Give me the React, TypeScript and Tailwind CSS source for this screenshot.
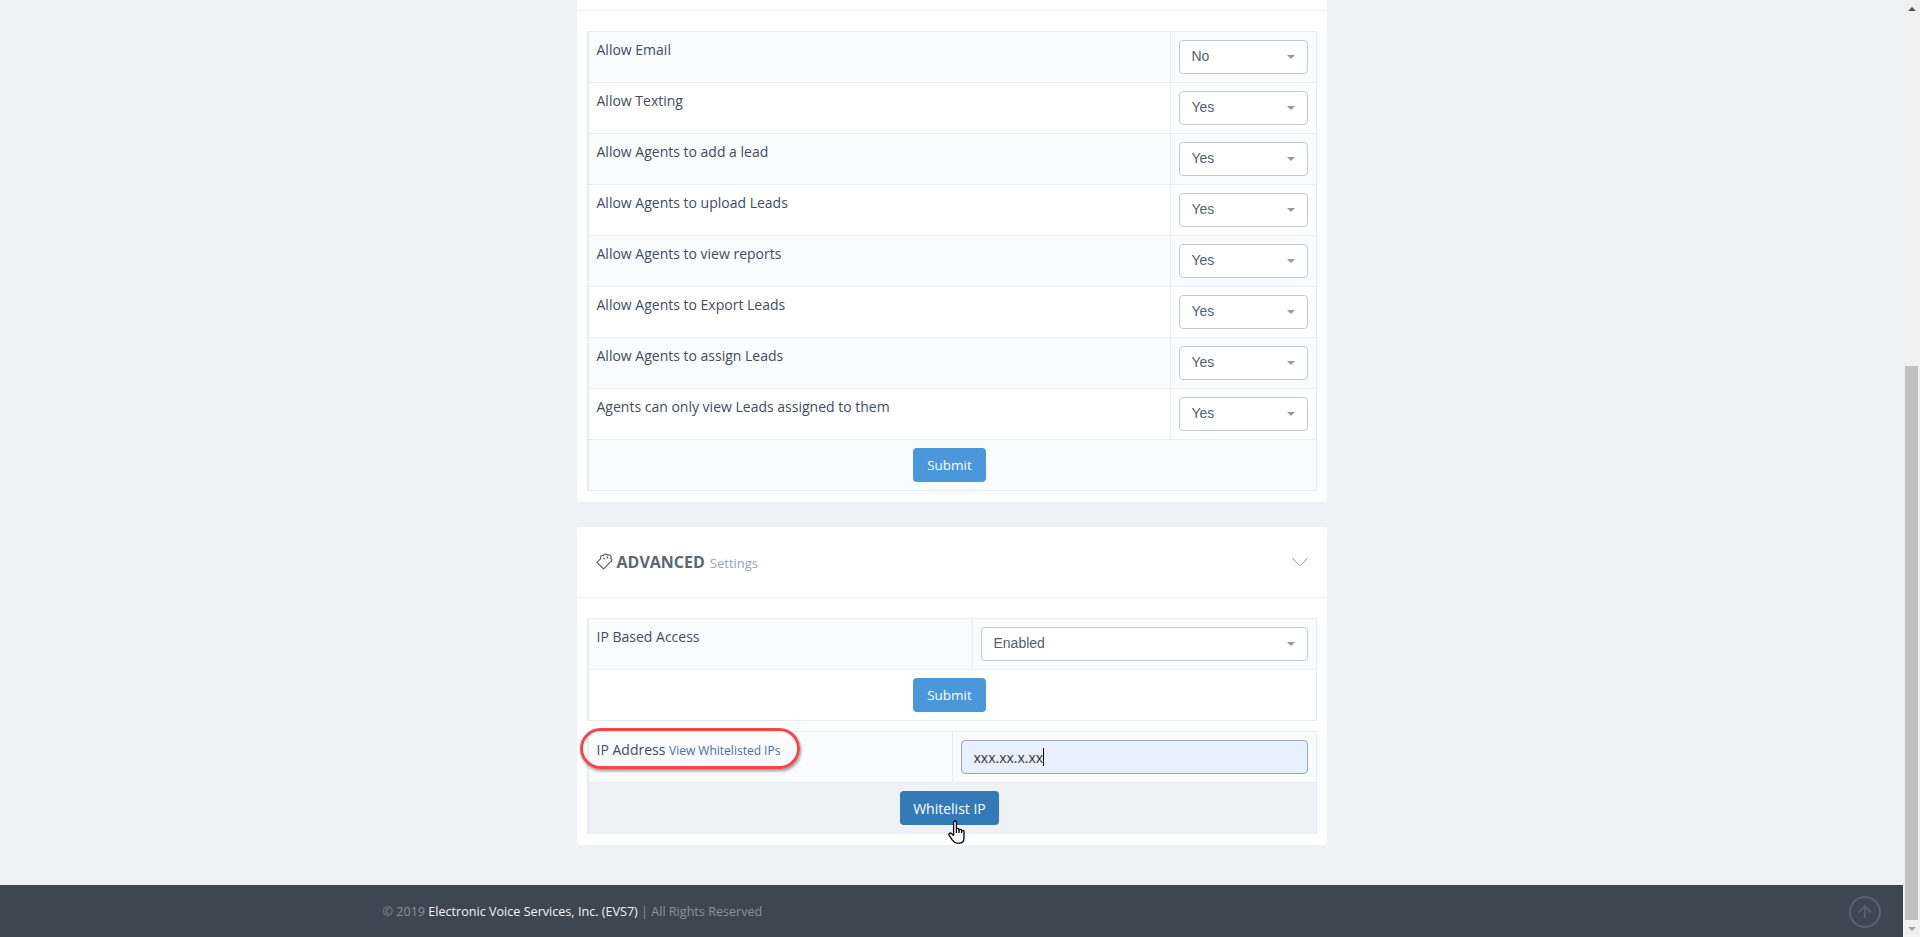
import React from "react";
import { ArrowUp, ChevronDown } from "lucide-react";

const toggles = [
  { label: "Allow Email", value: "No" },
  { label: "Allow Texting", value: "Yes" },
  { label: "Allow Agents to add a lead", value: "Yes" },
  { label: "Allow Agents to upload Leads", value: "Yes" },
  { label: "Allow Agents to view reports", value: "Yes" },
  { label: "Allow Agents to Export Leads", value: "Yes" },
  { label: "Allow Agents to assign Leads", value: "Yes" },
  { label: "Agents can only view Leads assigned to them", value: "Yes" },
];

const FakeSelect: React.FC<{ value: string }> = ({ value }) => {
  return (
    <div className="flex h-[34px] w-full items-center justify-between rounded-[4px] border border-[#c2cad8] bg-white pb-[1px] pl-[12px] pr-[12px] font-['Liberation_Sans',sans-serif] text-[14px] text-[#555e6e]">
      <span>{value}</span>
      <span className="h-0 w-0 border-x-[4px] border-t-[4px] border-x-transparent border-t-[#999]"></span>
    </div>
  );
};

const SubmitButton: React.FC = () => {
  return (
    <button className="h-[34px] w-[73px] rounded-[4px] bg-[#4a98db] text-[13.5px] text-white">
      Submit
    </button>
  );
};

// outline of the tag icon next to the section title
const TagIcon: React.FC = () => {
  return (
    <svg viewBox="0 0 16 16" className="mr-[4px] h-[17px] w-[17px] -translate-y-[1px] self-center text-[#5e6670]" fill="none" stroke="currentColor" strokeWidth="1.15" strokeLinejoin="round">
      <path d="M0.8 8.8 L4.6 5 C3.4 3.2 5.6 1.4 7 2.6 C7.2 0.6 10.4 0.4 10.8 2.2 C13 1 15.2 3.2 13.8 5.2 C15.4 6 15 8.2 13.2 8.6 L7.2 15 Z" />
      <path d="M6.6 5.2 C7.6 4.8 8.2 5.4 8.2 6.2 M9.6 3.8 C10.6 3.6 11.2 4.2 11 5.2" />
    </svg>
  );
};

// hand cursor sitting on the Whitelist IP button
const HandCursor: React.FC = () => {
  return (
    <svg viewBox="0 0 18 24" className="absolute left-[48px] top-[29px] h-[24px] w-[18px]" fill="#fff" stroke="#000" strokeWidth="1.3" strokeLinejoin="round">
      <path d="M5.6 13 V2.4 a1.4 1.4 0 0 1 2.8 0 V9.6 a1.3 1.3 0 0 1 2.6 0 V10.6 a1.3 1.3 0 0 1 2.6 0 V11.6 a1.2 1.2 0 0 1 2.4 0 V18 c0 3.2-2 5.2-5 5.2 h-1.6 c-2.4 0-3.6-1-5-3 L1.2 15.4 c-1-1.5 .9-3 2.2-2 L5.6 15.4 Z" />
      <path d="M8.4 10 V13 M11 10.4 V13 M13.6 11.4 V13" fill="none" />
    </svg>
  );
};

export default function App() {
  return (
    <div className="flex h-[937px] overflow-hidden bg-[#eef1f6] font-['Open_Sans',sans-serif] text-[14px] text-[#434c5b]">
      <div className="flex w-[1903px] flex-col">
        <div className="mx-auto w-[750px] rounded-b-[4px] bg-white px-[10px] pb-[11px]">
          <div className="-mx-[10px] h-[11px] border-b border-[#eef1f5]"></div>
          <div className="mt-5 w-[730px] border border-l-2 border-[#e7ecf1]">
            {toggles.map((item, i) => (
              <div
                key={item.label}
                className={
                  i % 2 === 0
                    ? "flex h-[51px] border-b border-[#e7ecf1] bg-[#fafbfd]"
                    : "flex h-[51px] border-b border-[#e7ecf1] bg-white"
                }
              >
                <div className="flex-1 p-[8px] leading-[20px]">{item.label}</div>
                <div className="w-[146px] border-l border-[#e7ecf1] p-[8px]">
                  <FakeSelect value={item.value} />
                </div>
              </div>
            ))}
            <div className="flex h-[50px] items-center justify-center bg-[#fafbfd] pr-[5px]">
              <SubmitButton />
            </div>
          </div>
        </div>

        <div className="mx-auto mt-[25px] w-[750px] rounded-[4px] bg-white px-[10px] pb-[11px]">
          <div className="-mx-[10px] flex h-[71px] items-center justify-between border-b border-[#eef1f5] pl-[19px] pr-[12px]">
            <div className="flex items-baseline">
              <TagIcon />
              <span className="text-[16px] font-bold text-[#5e6670]">ADVANCED</span>
              <span className="ml-[5px] text-[13px] text-[#9aa4b3]">Settings</span>
            </div>
            <ChevronDown size={30} strokeWidth={0.8} className="text-[#8a929c]" />
          </div>

          <div className="mt-5 w-[730px] border border-l-2 border-[#e7ecf1]">
            <div className="flex h-[50px] bg-[#fafbfd]">
              <div className="flex-1 p-[8px] leading-[20px]">IP Based Access</div>
              <div className="w-[344px] border-l border-[#e7ecf1] p-[8px]">
                <FakeSelect value="Enabled" />
              </div>
            </div>
            <div className="flex h-[51px] items-center justify-center border-t border-[#e7ecf1] bg-white pr-[5px]">
              <SubmitButton />
            </div>
          </div>

          <div className="mt-[10px] w-[730px] border border-l-2 border-[#e7ecf1]">
            <div className="relative flex h-[51px] border-b border-[#e7ecf1] bg-[#fafbfd]">
              <div className="flex-1 p-[8px] leading-[20px]">
                IP Address{" "}
                <a className="text-[12px] text-[#4a6ea8]">View Whitelisted IPs</a>
              </div>
              <div className="w-[364px] border-l border-[#e7ecf1] p-[8px]">
                <div className="flex h-[34px] items-center rounded-[4px] border border-[#98a6c4] bg-[#e8f0fe] px-3 text-[14px] text-[#333]">
                  xxx.xx.x.xx
                  <span className="h-[18px] w-px bg-black"></span>
                </div>
              </div>
              <div className="absolute left-[-9px] top-[-4px] h-[41px] w-[220px] rounded-full border-[3px] border-[#f44749] shadow-[1px_2px_3px_rgba(0,0,0,0.4)]"></div>
            </div>
            <div className="flex h-[50px] items-center justify-center bg-[#eef1f6] pr-[5px]">
              <button className="relative h-[34px] w-[99px] rounded-[4px] bg-[#337ab7] text-[14px] text-white">
                Whitelist IP
                <HandCursor />
              </button>
            </div>
          </div>
        </div>

        <div className="relative mt-auto h-[52px] bg-[#3e4651] text-[12.6px] leading-[54px] text-[#8a929c]">
          <div className="mx-auto w-[1140px] pl-[1px]">
            © 2019 <span className="text-[#f2f4f7]">Electronic Voice Services, Inc. (EVS7)</span> | All Rights Reserved
          </div>
          <div className="absolute right-[22px] top-[11px] flex h-[32px] w-[32px] items-center justify-center rounded-full border-2 border-[#5a6370]">
            <ArrowUp size={20} strokeWidth={2} className="text-[#5a6370]" />
          </div>
        </div>
      </div>

      <div className="flex w-[17px] flex-col items-center bg-[#f1f1f1]">
        <div className="flex h-[17px] items-center justify-center">
          <span className="h-0 w-0 border-x-[4px] border-b-[4px] border-x-transparent border-b-[#505050]"></span>
        </div>
        <div className="mt-[349px] h-[554px] w-[13px] bg-[#c1c1c1]"></div>
        <div className="flex h-[17px] items-center justify-center">
          <span className="h-0 w-0 border-x-[4px] border-t-[4px] border-x-transparent border-t-[#a3a3a3]"></span>
        </div>
      </div>
    </div>
  );
}
